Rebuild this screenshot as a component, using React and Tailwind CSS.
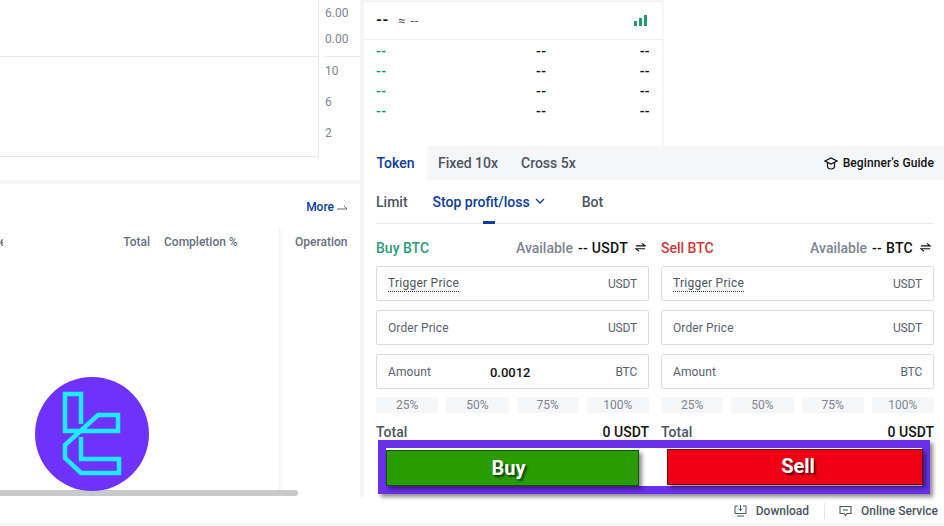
import React from "react";

const Swap = () => (
  <svg width="11" height="11" viewBox="0 0 12 12" fill="none" stroke="#111" strokeWidth="1.2" className="ml-[7px] mr-[3px] mb-[2px]">
    <path d="M1 4.2H11L7.5 1.5" />
    <path d="M11 7.4H1L4.5 10.2" />
  </svg>
);

const Field = ({ label, unit, dotted, value }) => (
  <div className="flex items-center h-[35px] border border-[#d9dce1] rounded-[2px] pl-[11px] pr-[11px] text-[12px] text-[#59626f]">
    <span className={dotted ? "border-b border-dotted border-[#333] leading-[16px] text-[#4d5561] tracking-[0.25px]" : "tracking-[0.1px]"}>{label}</span>
    <span className="flex-1 text-center text-[13px] font-medium text-[#111] pr-[26px] pt-[2px]">{value}</span>
    <span className="tracking-[-0.2px]">{unit}</span>
  </div>
);

const Percents = () => (
  <div className="grid grid-cols-4 gap-2 mt-2">
    {["25%", "50%", "75%", "100%"].map((p) => (
      <div key={p} className="h-4 bg-[#f5f6f8] text-center text-[12px] leading-4 text-[#7d8592]">{p}</div>
    ))}
  </div>
);

const Form = ({ side, color, asset, amount }) => (
  <div className="w-[273px] flex flex-col">
    <div className="flex items-center justify-between h-[42px] pt-[6px] text-[14px] font-medium">
      <span className={color}>{side} BTC</span>
      <span className="flex items-center">
        <span className="text-[#7d8592] mr-[5px]">Available</span>
        <span className="text-[#111] tracking-[0.3px]">-- {asset}</span>
        <Swap />
      </span>
    </div>
    <div className="flex flex-col gap-[9px]">
      <Field label="Trigger Price" unit="USDT" dotted />
      <Field label="Order Price" unit="USDT" />
      <Field label="Amount" unit="BTC" value={amount} />
    </div>
    <Percents />
    <div className="flex justify-between mt-[11px] text-[14px] leading-[16px] font-medium">
      <span className="text-[#4d5561]">Total</span>
      <span className="text-[#111]">0 USDT</span>
    </div>
  </div>
);

const Row = () => (
  <div className="flex h-5 items-center text-[14px] font-medium tracking-[0.4px] pl-3 pr-3">
    <span className="text-[#009b72] w-[160px]">--</span>
    <span className="text-[#111] flex-1">--</span>
    <span className="text-[#111]">--</span>
  </div>
);

export default function App() {
  return (
    <div
      className="relative w-[944px] h-[526px] overflow-hidden bg-[#f5f6f8] flex flex-col"
      style={{ fontFamily: "Roboto, 'Liberation Sans', sans-serif" }}
    >
      <div className="flex h-[497px]">
        <div className="w-[360px] shrink-0 flex flex-col">
          <div className="h-[180px] bg-white flex">
            <div className="w-[319px] h-[157px] border-r border-b border-[#e6e8ec] flex flex-col">
              <div className="h-[57px] border-b border-[#e6e8ec]" />
            </div>
            <div className="flex-1 relative text-[12px] text-[#7d8592] pl-[6px]">
              <div className="h-[57px] flex flex-col pt-[5px] gap-[10px] leading-4 border-b border-[#e6e8ec]">
                <span>6.00</span>
                <span>0.00</span>
              </div>
              <div className="flex flex-col pt-[6px] gap-[15px] leading-4">
                <span>10</span>
                <span>6</span>
                <span>2</span>
              </div>
            </div>
          </div>
          <div className="mt-1 flex-1 bg-white flex flex-col">
            <div className="h-[44px] flex items-end justify-end pr-3 pb-[12px] text-[12px] font-medium text-[#0b3d9c]">
              <span>More</span>
              <svg width="11" height="8" viewBox="0 0 11 8" fill="none" stroke="#4d5561" strokeWidth="0.9" className="ml-[3px] mb-[3px]">
                <path d="M0 4H10L7 1" />
              </svg>
            </div>
            <div className="flex flex-1">
              <div className="w-[280px] pt-[6px] flex text-[12px] text-[#667080] font-medium leading-4 border-r border-[#eff0f3] shadow-[2px_0_3px_rgba(0,0,0,0.03)]">
                <span className="w-[150px] text-right relative">
                  <span className="absolute left-0 w-[3px] overflow-hidden">e</span>
                  Total
                </span>
                <span className="ml-[14px]">Completion %</span>
              </div>
              <div className="flex-1 pt-[6px] pl-[15px] text-[12px] text-[#667080] font-medium leading-4">Operation</div>
            </div>
          </div>
        </div>

        <div className="ml-1 flex-1 bg-white flex flex-col">
          <div className="h-[146px] flex">
            <div className="w-[300px] bg-[#f5f6f8] pr-[2px] pt-[1px]">
              <div className="h-full bg-white border-t border-[#eceef1]">
                <div className="h-[38px] flex items-center pl-3 pr-[14px] border-b border-[#eceef1]">
                  <span className="text-[15px] font-bold tracking-[0.6px] text-[#111]">--</span>
                  <span className="text-[13px] ml-[9px] tracking-[0.8px] text-[#4d5561]">≈ --</span>
                  <svg width="14" height="11" viewBox="0 0 14 11" className="ml-auto" fill="#1f9a72">
                    <rect x="0" y="6" width="3" height="5" />
                    <rect x="5" y="3" width="3" height="8" />
                    <rect x="10" y="0" width="3" height="11" />
                  </svg>
                </div>
                <div className="pt-[1px]">
                  <Row />
                  <Row />
                  <Row />
                  <Row />
                </div>
              </div>
            </div>
          </div>

          <div className="h-[34px] bg-[#f5f6f8] flex items-center text-[14px] font-medium text-[#4d5561]">
            <span className="w-[63px] h-full bg-white text-[#0b3d9c] flex items-center justify-center">Token</span>
            <span className="ml-[11px]">Fixed 10x</span>
            <span className="ml-[23px]">Cross 5x</span>
            <span className="ml-auto mr-[10px] flex items-center text-[12px] tracking-[0.1px] text-[#111]">
              <svg width="14" height="14" viewBox="0 0 14 14" fill="none" stroke="#111" strokeWidth="1.2" className="mr-[5px]">
                <path d="M1 5L7 2L13 5L7 8Z" />
                <path d="M3.5 6.5V10C3.5 12 5.2 13 7 13C8.8 13 10.5 12 10.5 10V6.5" />
              </svg>
              Beginner's Guide
            </span>
          </div>

          <div className="pl-3 pr-[10px] flex flex-col">
            <div className="relative h-[44px] flex items-center pt-[1px] border-b border-[#e9ebee] text-[14px] font-medium text-[#4d5561]">
              <span>Limit</span>
              <span className="ml-[25px] text-[#0b3d9c] flex items-center">
                Stop profit/loss
                <svg width="10" height="6" viewBox="0 0 10 6" fill="none" stroke="#0b3d9c" strokeWidth="1.3" className="ml-[5px] mb-[3px]">
                  <path d="M1 1L5 5L9 1" />
                </svg>
              </span>
              <span className="ml-[37px] mt-[1px]">Bot</span>
              <span className="absolute left-[107px] bottom-[-1px] w-3 h-[3px] bg-[#0b3d9c]" />
            </div>
            <div className="flex gap-3">
              <Form side="Buy" color="text-[#2a9d78]" asset="USDT" amount="0.0012" />
              <Form side="Sell" color="text-[#c93a3a]" asset="BTC" />
            </div>
          </div>
        </div>
      </div>

      <div className="h-[26px] pt-[1px] bg-white flex items-center justify-end pr-[6px] text-[12px] text-[#4d5561] font-medium">
        <svg width="13" height="13" viewBox="0 0 13 13" fill="none" stroke="#4d5561" strokeWidth="1" className="mr-[9px]">
          <path d="M4 2H1V9.5H12V2H9" />
          <path d="M6.5 1V6.5M4.5 4.7L6.5 6.7L8.5 4.7" />
          <path d="M3 12H10" />
        </svg>
        <span>Download</span>
        <span className="w-px h-4 bg-[#e3e5e9] ml-[15px] mr-[14px]" />
        <svg width="13" height="12" viewBox="0 0 13 12" fill="none" stroke="#4d5561" strokeWidth="1.1" className="mr-[9px]">
          <path d="M1 1.5H12V8.5H8L6.5 10.5L5 8.5H1Z" />
          <path d="M4 5H9" />
        </svg>
        <span>Online Service</span>
      </div>
      <div className="h-[3px] bg-[#f5f6f8]" />

      {/* horizontal scrollbar */}
      <div className="absolute left-0 top-[490px] w-[298px] h-[6px] rounded-r-[3px] bg-[#c8c9cb]" />

      {/* watermark logo */}
      <svg className="absolute left-[35px] top-[377px]" width="114" height="114" viewBox="35 377 114 114" fill="none">
        <circle cx="92" cy="434" r="57" fill="#6f32fb" />
        <g stroke="#1de9ff" strokeWidth="4.5" strokeLinejoin="miter">
          <path d="M81 424V394H65V431H118V415H98L65 445V458L81 473H119V459H81V437" />
        </g>
      </svg>

      {/* highlight box around the action buttons */}
      <div className="absolute left-[378px] top-[440px] w-[552px] h-[54px] bg-white border-[8px] border-[#6a2fe8] shadow-[3px_3px_4px_rgba(0,0,0,0.45)]" />
      <button className="absolute left-[386px] top-[450px] w-[253px] h-[36px] bg-[#299b03] border border-[#17500a] text-white text-[20px] font-bold pr-2 shadow-[3px_3px_4px_rgba(0,0,0,0.45)] [text-shadow:2px_2px_2px_rgba(0,0,0,0.6)]">
        Buy
      </button>
      <button className="absolute left-[667px] top-[449px] w-[256px] h-[36px] bg-[#f00014] border border-[#6d0a12] text-white text-[20px] font-bold pl-[6px] pb-[3px] shadow-[3px_3px_4px_rgba(0,0,0,0.45)] [text-shadow:2px_2px_2px_rgba(0,0,0,0.6)]">
        Sell
      </button>
    </div>
  );
}
